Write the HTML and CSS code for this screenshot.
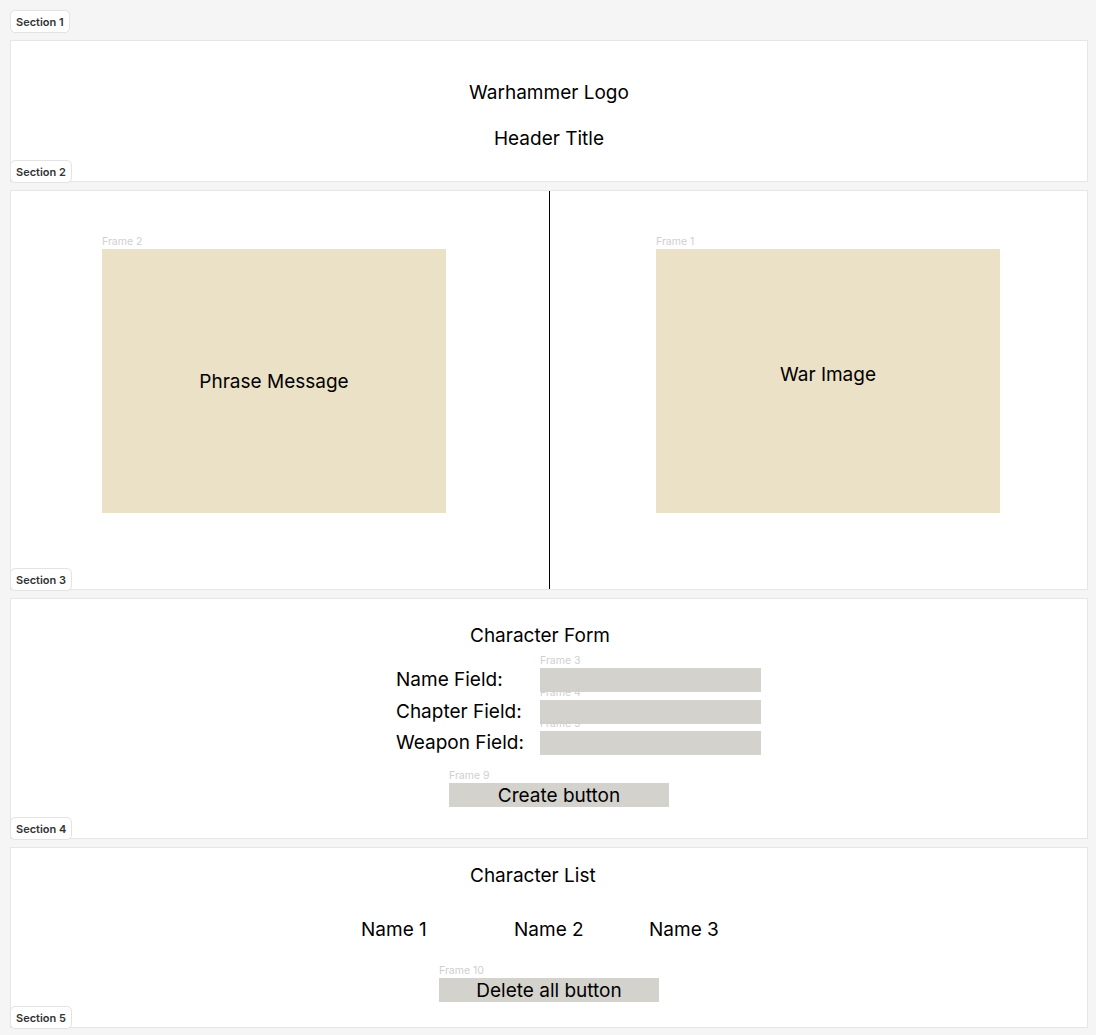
FILE: index.html
```html
<!DOCTYPE html>
<html>
<head>
<meta charset="utf-8">
<link rel="stylesheet" href="styles.css">
</head>
<body>
<main class="canvas">
  <section class="section s-header">
    <span class="section-label">Section 1</span>
    <div class="heading">Warhammer Logo</div>
    <div class="heading header-title">Header Title</div>
  </section>

  <section class="section s-hero">
    <span class="section-label">Section 2</span>
    <div class="hero-col hero-left">
      <div class="frame">
        <span class="frame-label">Frame 2</span>
        <div class="tan-box">Phrase Message</div>
      </div>
    </div>
    <div class="hero-col hero-right">
      <div class="frame">
        <span class="frame-label">Frame 1</span>
        <div class="tan-box tan-raised">War Image</div>
      </div>
    </div>
  </section>

  <section class="section s-form">
    <span class="section-label">Section 3</span>
    <div class="form-block">
      <div class="heading form-title">Character Form</div>
      <div class="form-grid">
        <div class="field-label">Name Field:</div>
        <div class="frame"><span class="frame-label">Frame 3</span><div class="input-box"></div></div>
        <div class="field-label">Chapter Field:</div>
        <div class="frame"><span class="frame-label">Frame 4</span><div class="input-box"></div></div>
        <div class="field-label">Weapon Field:</div>
        <div class="frame"><span class="frame-label">Frame 5</span><div class="input-box"></div></div>
      </div>
      <div class="frame btn-create">
        <span class="frame-label">Frame 9</span>
        <div class="gray-btn">Create button</div>
      </div>
    </div>
  </section>

  <section class="section s-list">
    <span class="section-label">Section 4</span>
    <div class="list-block">
      <div class="heading list-title">Character List</div>
      <div class="names">
        <div class="heading">Name 1</div>
        <div class="heading">Name 2</div>
        <div class="heading">Name 3</div>
      </div>
      <div class="frame btn-delete">
        <span class="frame-label">Frame 10</span>
        <div class="gray-btn">Delete all button</div>
      </div>
    </div>
  </section>

  <section class="section s-footer">
    <span class="section-label">Section 5</span>
  </section>
</main>
</body>
</html>
```

FILE: styles.css
```css
* { box-sizing: border-box; }

html, body {
  margin: 0;
  background: #f5f5f5;
}

body {
  font-family: Inter, "Noto Sans", "Liberation Sans", sans-serif;
  color: #000;
}

.canvas {
  display: flex;
  flex-direction: column;
  gap: 8px;
  padding: 40px 8px 20px 10px;
}

.section {
  position: relative;
  background: #fff;
  border: 1px solid #e6e6e6;
}

.section-label {
  position: absolute;
  left: -1px;
  top: -31px;
  height: 23px;
  padding: 0 5px;
  display: flex;
  align-items: center;
  background: #fff;
  border: 1px solid #e3e3e3;
  border-radius: 5px;
  font-size: 11px;
  font-weight: 600;
  color: #333;
  white-space: nowrap;
  z-index: 2;
}

.heading {
  font-size: 19px;
  line-height: 22px;
  white-space: nowrap;
}

/* Section 1 */
.s-header {
  height: 142px;
  display: flex;
  flex-direction: column;
  align-items: center;
  padding-top: 41px;
}
.header-title { margin-top: 24px; }

/* Section 2 */
.s-hero {
  height: 400px;
  display: grid;
  grid-template-columns: 538px 1fr;
}
.hero-col { padding-top: 58px; }
.hero-left { padding-left: 91px; }
.hero-right {
  border-left: 1px solid #000;
  padding-left: 106px;
}

.frame { position: relative; }
.frame-label {
  position: absolute;
  left: 0;
  top: -13px;
  font-size: 10.5px;
  line-height: 12px;
  color: #cfcfcf;
  white-space: nowrap;
}

.tan-box {
  width: 344px;
  height: 264px;
  background: #ebe1c7;
  display: flex;
  align-items: center;
  justify-content: center;
  font-size: 19px;
}
.tan-raised { padding-bottom: 14px; }

/* Section 3 */
.s-form {
  height: 241px;
  padding: 26px 0 0 385px;
}
.form-block {
  display: flex;
  flex-direction: column;
  align-items: flex-start;
}
.form-title { margin-left: 74px; }
.form-grid {
  margin-top: 21px;
  display: grid;
  grid-template-columns: 144px 221px;
  row-gap: 7.5px;
  align-items: center;
}
.field-label {
  font-size: 19px;
  line-height: 24px;
}
.input-box {
  height: 24px;
  background: #d4d2cd;
}

.gray-btn {
  width: 220px;
  height: 24px;
  background: #d4d2cd;
  display: flex;
  align-items: center;
  justify-content: center;
  font-size: 19px;
}
.btn-create {
  margin-top: 28px;
  margin-left: 53px;
}

/* Section 4 */
.s-list {
  height: 181px;
  padding: 17px 0 0 350px;
}
.list-block {
  display: flex;
  flex-direction: column;
  align-items: flex-start;
}
.list-title { margin-left: 109px; }
.names {
  margin-top: 32px;
  display: grid;
  grid-template-columns: 153px 135px auto;
}
.btn-delete {
  margin-top: 37px;
  margin-left: 78px;
}

/* Section 5 */
.s-footer { height: 180px; }
```
